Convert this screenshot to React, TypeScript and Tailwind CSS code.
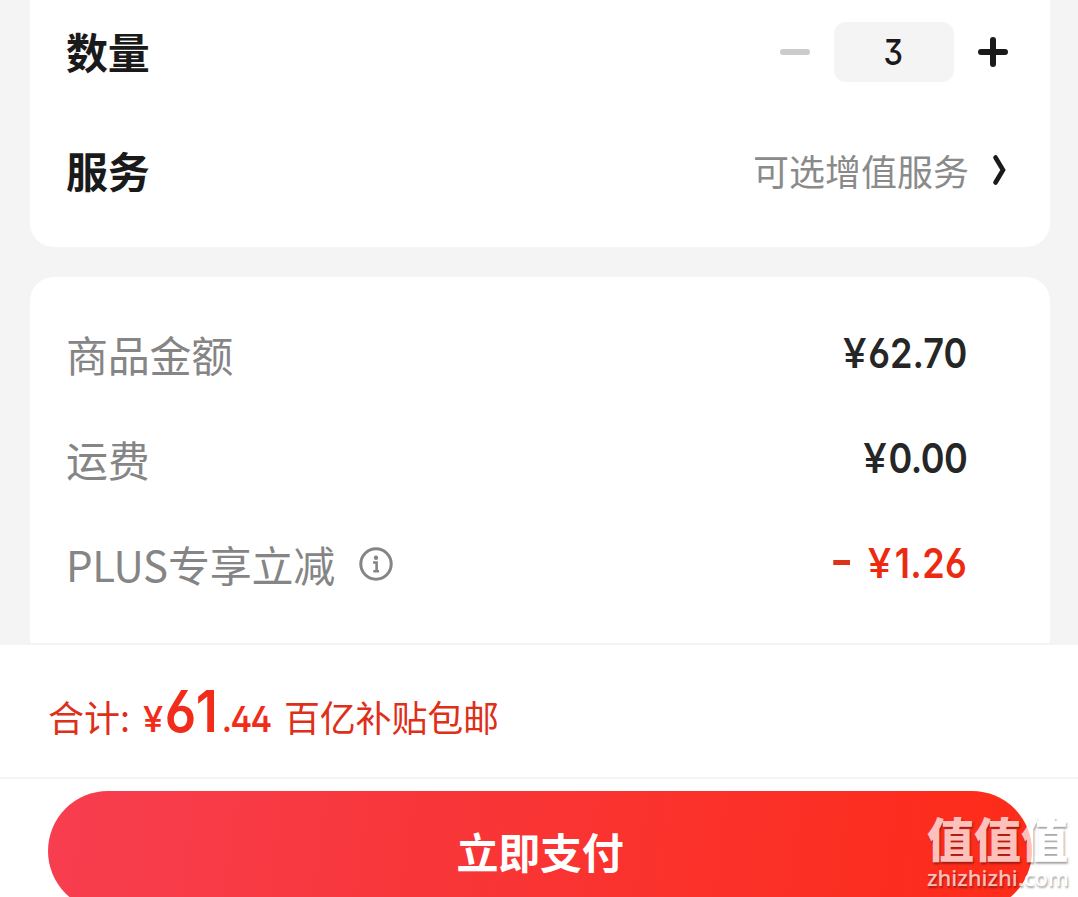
type PriceRow = {
  label: string;
  value: string;
  info?: boolean;
  discount?: boolean;
};

const rows: PriceRow[] = [
  { label: "商品金额", value: "62.70" },
  { label: "运费", value: "0.00" },
  { label: "PLUS专享立减", value: "1.26", info: true, discount: true },
];

function InfoIcon() {
  return (
    <svg width="34" height="34" viewBox="0 0 34 34" fill="none" stroke="#858585" className="ml-[24px]">
      <circle cx="17" cy="17" r="15.2" strokeWidth="3" />
      <circle cx="17" cy="10.8" r="2.2" fill="#858585" stroke="none" />
      <path d="M14 15.5h3.6v8.2M14.3 24.2h5.8" strokeWidth="2.6" />
    </svg>
  );
}

function Options() {
  return (
    <section className="mx-[30px] mr-7 h-[247px] rounded-b-[24px] bg-white pl-9 text-[#1a1a1a]">
      <div className="flex h-[104px] items-center justify-between pr-[42px]">
        <span className="-mt-[2px] text-[42px] leading-none font-bold tracking-[-0.3px]">数量</span>
        <div className="flex items-center gap-6">
          <button className="h-1.5 w-[30px] rounded-full bg-[#cbcbcb]" aria-label="减少" />
          <span className="flex h-[60px] w-[120px] items-center justify-center rounded-xl bg-[#f4f4f4] font-['Inter'] text-[36px] font-medium [font-feature-settings:'cv09']">
            <span className="mr-[1px] scale-x-[0.86]">3</span>
          </span>
          <button aria-label="增加">
            <svg width="30" height="30" viewBox="0 0 30 30" stroke="#1a1a1a" strokeWidth="6" strokeLinecap="round">
              <path d="M3 15h24M15 3v24" />
            </svg>
          </button>
        </div>
      </div>
      <div className="flex h-[132px] items-center justify-between pr-[44px]">
        <span className="text-[42px] leading-none font-bold tracking-[-0.3px]">服务</span>
        <div className="flex items-center text-[36px] leading-none text-[#8a8a8a]">
          可选增值服务
          <svg width="14" height="32" viewBox="0 0 14 32" fill="none" stroke="#1a1a1a" strokeWidth="4.6" strokeLinecap="round" className="ml-[23px]">
            <path d="M3.5 3.5l7.5 12.5-7.5 12.5" />
          </svg>
        </div>
      </div>
    </section>
  );
}

function Prices() {
  return (
    <section className="mt-[30px] mr-7 ml-[30px] h-[366px] rounded-t-[24px] bg-white pt-6 pr-[83px] pl-9">
      {rows.map((row) => (
        <div key={row.label} className="flex h-[105px] items-center justify-between">
          <div className="flex items-center text-[42px] leading-none tracking-[-0.25px] text-[#858585]">
            {row.label}
            {row.info && <InfoIcon />}
          </div>
          <div
            className={
              row.discount
                ? "flex origin-right scale-x-[0.88] items-center font-['Inter'] text-[41px] leading-none font-semibold text-[#ec2a12] [font-feature-settings:'cv03','cv04','cv09']"
                : "flex origin-right scale-x-[0.88] font-['Inter'] text-[41px] leading-none font-semibold text-[#262626] [font-feature-settings:'cv03','cv04','cv09']"
            }
          >
            {row.discount && <span className="-mt-[3px] mr-[22px] h-[5px] w-[19px] bg-[#dc3218]" />}
            <span className={row.discount ? "mr-[6px] scale-x-[1.17] font-medium" : "mr-[4px] scale-x-[1.17] font-medium"}>¥</span>
            <span className={row.discount ? "tracking-[0.4px]" : row.value === "0.00" ? "tracking-[-0.6px]" : ""}>
              {row.value}
            </span>
          </div>
        </div>
      ))}
    </section>
  );
}

function Watermark() {
  return (
    <div className="absolute top-[812px] left-[927px] w-[146px] text-white opacity-70 [text-shadow:1px_2px_2px_rgba(0,0,0,0.5)]">
      <div className="text-[47px] leading-[50px] font-black">值值值</div>
      <div className="font-['Noto_Sans'] text-[22px] leading-[30px] font-medium">zhizhizhi.com</div>
    </div>
  );
}

export default function App() {
  return (
    <div className="relative h-[897px] w-[1078px] overflow-hidden bg-[#f4f4f4] font-['Noto_Sans_CJK_SC',sans-serif]">
      <Options />
      <Prices />
      <footer className="border-t-2 border-[#f4f4f4] bg-white">
        <div className="flex h-[134px] items-baseline border-b-2 border-[#f4f4f4] pt-[37px] pl-12 text-[36px] leading-none text-[#de2f19]">
          <span className="w-[95px]">合计:</span>
          <span className="w-[127px] font-['Inter'] font-semibold text-[#f22c1b] [font-feature-settings:'cv02','cv03','cv04']">
            <span className="inline-block origin-left scale-x-[0.9] whitespace-nowrap">
              <span className="mr-[4px] inline-block origin-left scale-x-[1.12] font-medium">¥</span>
              <span className="text-[58px] leading-none tracking-[-0.5px]">61</span>
              <span className="ml-[5px] tracking-[-1.8px]">.44</span>
            </span>
          </span>
          <span className="ml-[14px] tracking-[-0.2px]">百亿补贴包邮</span>
        </div>
        <button className="mt-3 ml-12 flex h-[120px] w-[984px] items-center justify-center rounded-full bg-[linear-gradient(98deg,#f73e50,#f93433_50%,#fe2b18)] text-[42px] leading-none font-bold tracking-[-0.3px] text-white">
          立即支付
        </button>
      </footer>
      <Watermark />
    </div>
  );
}
